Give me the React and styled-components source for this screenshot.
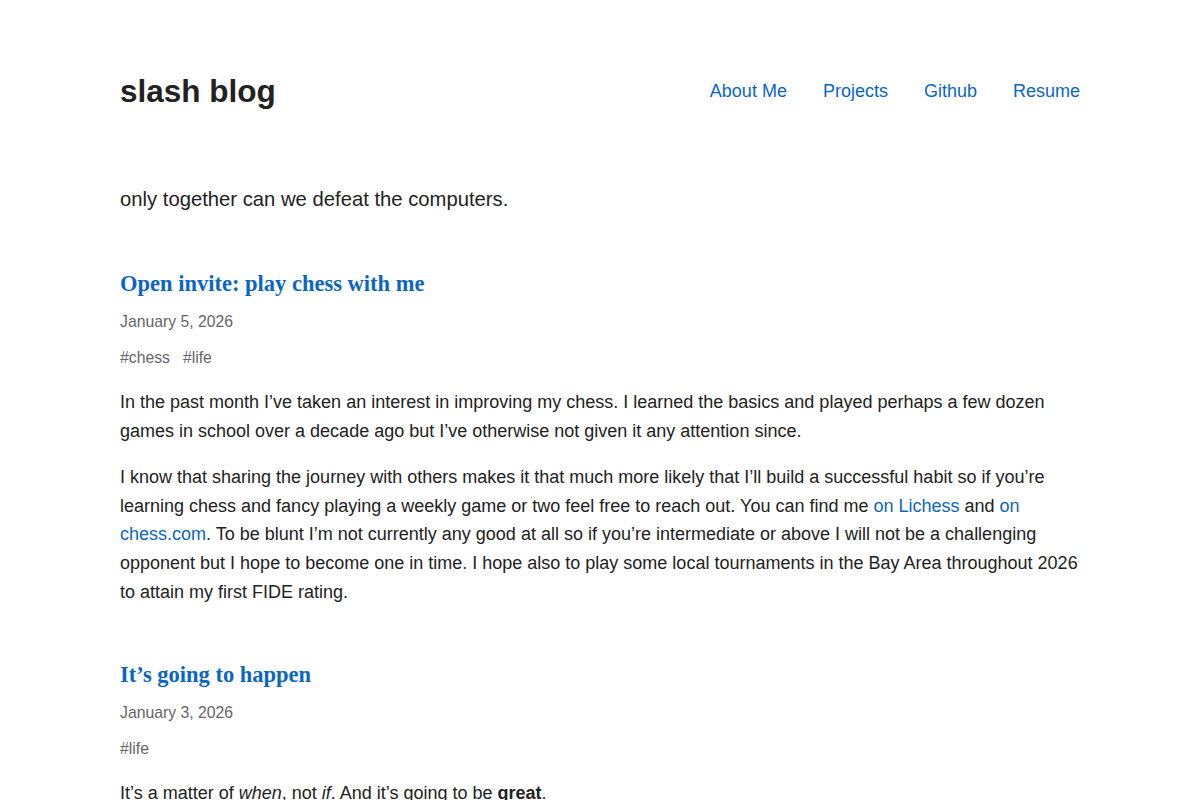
import React from "react";
import styled, { createGlobalStyle } from "styled-components";

const GlobalStyle = createGlobalStyle`
  body {
    margin: 0;
    background: #fff;
    color: #222;
    font-family: "Liberation Sans", Arial, sans-serif;
  }
`;

const Page = styled.div`
  max-width: 960px;
  margin: 0 auto;
  padding-top: 72px;
`;

const Header = styled.header`
  display: flex;
  justify-content: space-between;
  align-items: center;
`;

const SiteTitle = styled.h1`
  margin: 0;
  font-size: 31.5px;
  line-height: 38px;
  font-weight: 700;
  color: #222;
`;

const Nav = styled.nav`
  display: flex;
  gap: 36px;
`;

const NavLink = styled.a`
  font-size: 18px;
  line-height: 24px;
  color: #0a66c2;
  text-decoration: none;
`;

const Tagline = styled.p`
  margin: 73px 0 0;
  font-size: 20.25px;
  line-height: 32px;
`;

const Post = styled.article`
  margin-top: 53px;
`;

const PostTitle = styled.h2`
  margin: 0;
  font-family: "Liberation Serif", "Times New Roman", serif;
  font-size: 22.5px;
  line-height: 31px;
  font-weight: 700;
  a {
    color: #0a66c2;
    text-decoration: none;
  }
`;

const PostDate = styled.div`
  margin-top: 11px;
  font-size: 15.75px;
  line-height: 24px;
  color: #666;
`;

const Tags = styled.div`
  display: flex;
  gap: 13px;
  margin-top: 12px;
  font-size: 15.75px;
  line-height: 24px;
  color: #666;
`;

const Body = styled.div`
  margin-top: 18px;
  font-size: 18px;
  line-height: 28.6px;
  p {
    margin: 0 0 18px;
  }
  p:last-child {
    margin-bottom: 0;
  }
  a {
    color: #0a66c2;
    text-decoration: none;
  }
`;

const NAV = ["About Me", "Projects", "Github", "Resume"];

export default function App() {
  return (
    <>
      <GlobalStyle />
      <Page>
        <Header>
          <SiteTitle>slash blog</SiteTitle>
          <Nav>
            {NAV.map((item) => (
              <NavLink href="#" key={item}>
                {item}
              </NavLink>
            ))}
          </Nav>
        </Header>

        <Tagline>only together can we defeat the computers.</Tagline>

        <Post>
          <PostTitle>
            <a href="#">Open invite: play chess with me</a>
          </PostTitle>
          <PostDate>January 5, 2026</PostDate>
          <Tags>
            <span>#chess</span>
            <span>#life</span>
          </Tags>
          <Body>
            <p>
              In the past month I’ve taken an interest in improving my chess. I
              learned the basics and played perhaps a few dozen games in school
              over a decade ago but I’ve otherwise not given it any attention
              since.
            </p>
            <p>
              I know that sharing the journey with others makes it that much
              more likely that I’ll build a successful habit so if you’re
              learning chess and fancy playing a weekly game or two feel free to
              reach out. You can find me <a href="#">on Lichess</a> and{" "}
              <a href="#">on chess.com</a>. To be blunt I’m not currently any
              good at all so if you’re intermediate or above I will not be a
              challenging opponent but I hope to become one in time. I hope also
              to play some local tournaments in the Bay Area throughout 2026 to
              attain my first FIDE rating.
            </p>
          </Body>
        </Post>

        <Post>
          <PostTitle>
            <a href="#">It’s going to happen</a>
          </PostTitle>
          <PostDate>January 3, 2026</PostDate>
          <Tags>
            <span>#life</span>
          </Tags>
          <Body>
            <p>
              It’s a matter of <em>when</em>, not <em>if</em>. And it’s going to
              be <strong>great</strong>.
            </p>
          </Body>
        </Post>
      </Page>
    </>
  );
}
